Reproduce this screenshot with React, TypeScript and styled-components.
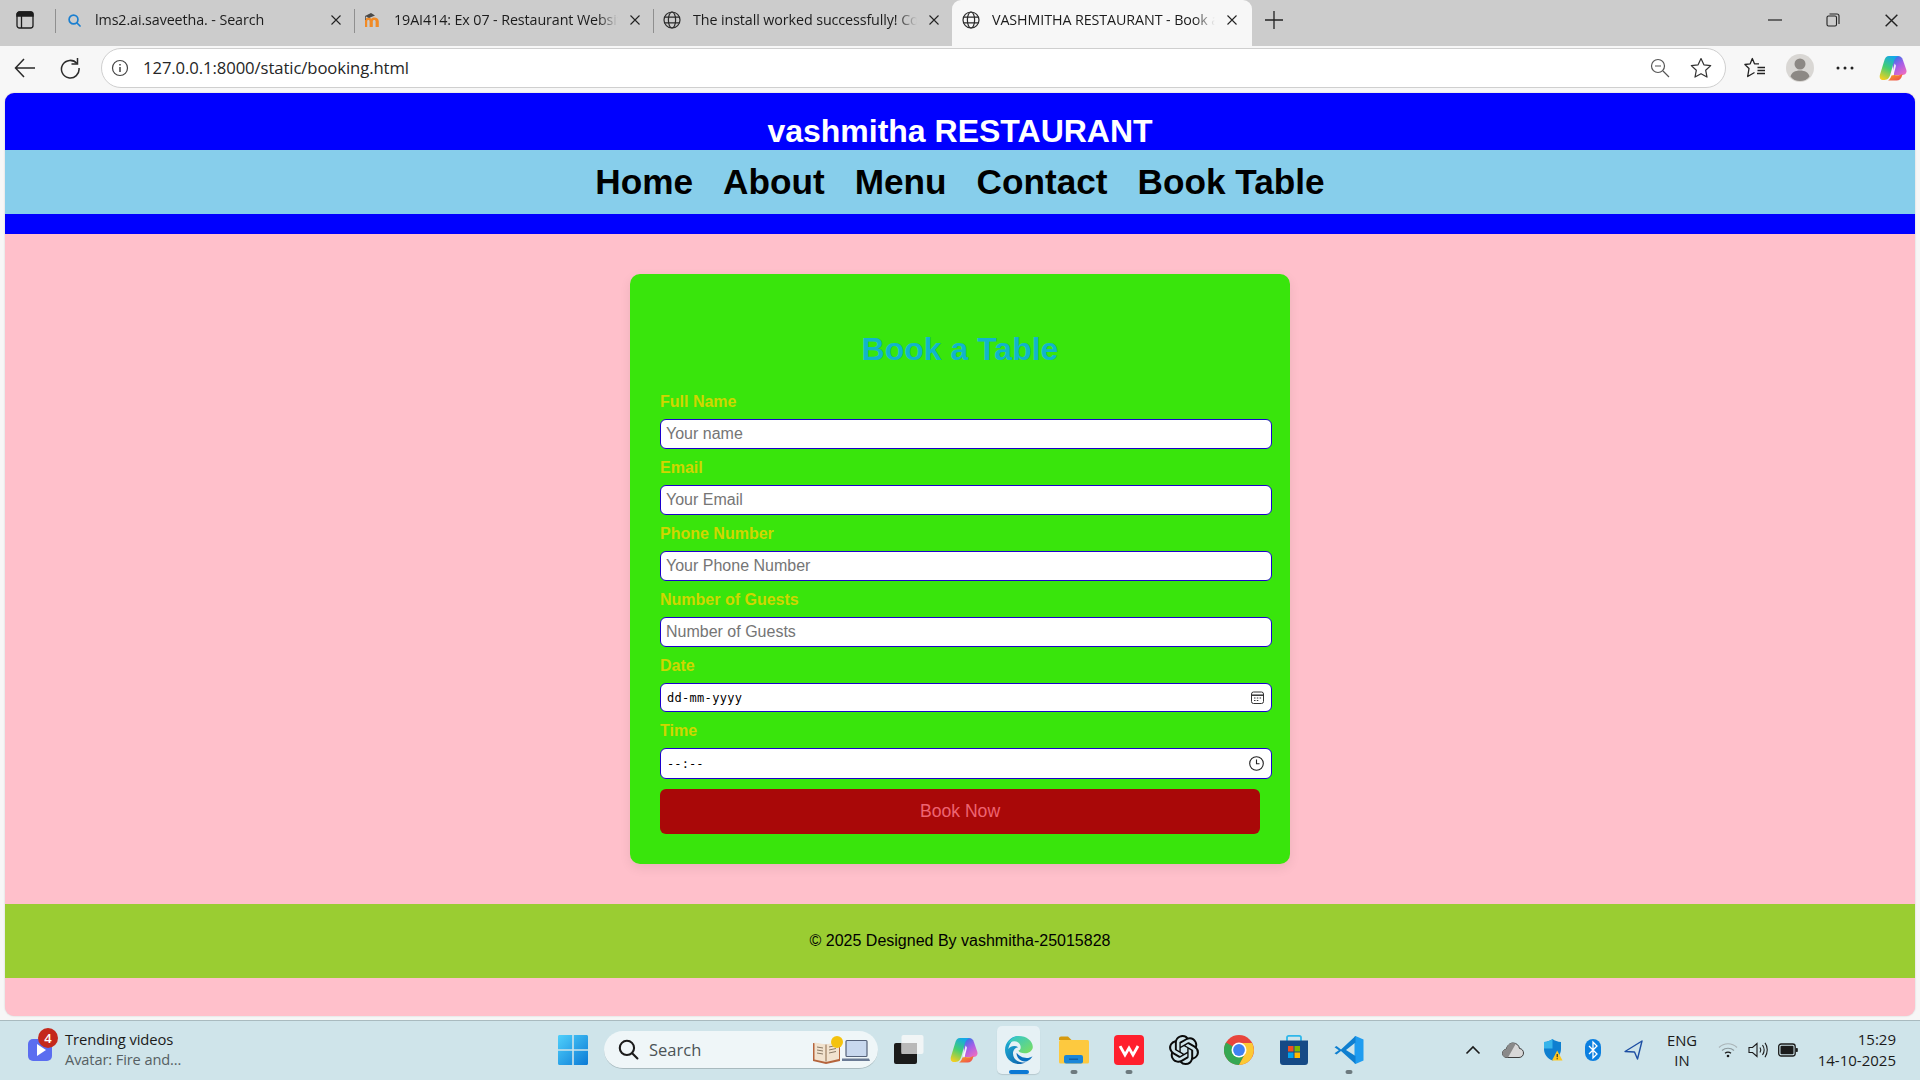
import React from "react";
import styled, { createGlobalStyle } from "styled-components";
import { SiOpenai } from "react-icons/si";

const Global = createGlobalStyle`
  html, body { margin: 0; padding: 0; width: 1920px; height: 1080px; overflow: hidden; background: #f7f7f7; }
  * { box-sizing: border-box; }
`;

const UI = `"Open Sans", "Noto Sans", sans-serif`;
const PAGE = `"Liberation Sans", Arial, sans-serif`;

const Screen = styled.div`
  width: 1920px; height: 1080px; display: flex; flex-direction: column; background: #f7f7f7; overflow: hidden;
`;

/* ---------- browser chrome ---------- */
const TabStrip = styled.div`
  height: 46px; flex: none; background: #cccccc; display: flex; align-items: stretch;
  font-family: ${UI}; color: #1c1c1c;
`;
const SideButton = styled.div`
  width: 55px; flex: none; display: flex; align-items: center; justify-content: center; padding-bottom: 6px; padding-right: 6px;
`;
const Tab = styled.div<{ $active?: boolean; $sep?: boolean }>`
  position: relative; flex: none; display: flex; align-items: center; height: 46px; padding-bottom: 6px;
  width: ${p => (p.$active ? "300px" : "299px")};
  padding-left: 10px;
  padding-right: ${p => (p.$active ? "13px" : "11px")};
  background: ${p => (p.$active ? "#f7f7f7" : "transparent")};
  border-radius: ${p => (p.$active ? "9px 9px 0 0" : "0")};
  &::before {
    content: ${p => (p.$sep ? '""' : "none")};
    position: absolute; left: 0; top: 9px; height: 24px; width: 1px; background: #8f8f8f;
  }
`;
const TabIcon = styled.span`
  width: 18px; height: 18px; flex: none; display: flex; align-items: center; justify-content: center; margin-right: 12px;
`;
const TabTitle = styled.span`
  flex: 1; min-width: 0; font-size: 14.3px; white-space: nowrap; overflow: hidden; letter-spacing: -0.1px; margin-bottom: 2px;
  mask-image: linear-gradient(to right, #000 calc(100% - 26px), transparent calc(100% - 6px));
`;
const TabClose = styled.span`
  width: 14px; height: 14px; margin-left: 4px; flex: none; display: flex; align-items: center; justify-content: center;
`;
const NewTab = styled.div`
  width: 44px; flex: none; display: flex; align-items: center; justify-content: center; padding-bottom: 6px;
`;
const WindowControls = styled.div`
  margin-left: auto; display: flex; align-items: center; padding-bottom: 6px; padding-right: 0;
`;
const WinButton = styled.span`
  width: 58px; display: flex; justify-content: center;
`;

const Toolbar = styled.div`
  height: 47px; flex: none; background: #f7f7f7; display: flex; align-items: center; padding-left: 13px; padding-bottom: 4px;
  font-family: ${UI};
`;
const NavIcon = styled.span`
  width: 24px; height: 24px; flex: none; display: flex; align-items: center; justify-content: center; margin-right: 21px;
`;
const AddressBar = styled.div`
  width: 1625px; height: 40px; flex: none; margin-left: -2px; background: #fff; border: 1px solid #cfcfcf; border-radius: 20px;
  display: flex; align-items: center; padding: 0 13px 0 9px;
`;
const InfoSlot = styled.span`
  width: 18px; height: 18px; flex: none; display: flex; margin-right: 14px;
`;
const Url = styled.span`
  font-size: 16.7px; color: #262626; letter-spacing: -0.1px;
`;
const AddressTools = styled.div`
  margin-left: auto; display: flex; align-items: center; gap: 20px;
`;
const ToolbarRight = styled.div`
  display: flex; align-items: center; margin-left: 16px;
`;
const ToolSlot = styled.span<{ $w: number }>`
  width: ${p => p.$w}px; height: 32px; display: flex; align-items: center; justify-content: center; flex: none;
`;

/* ---------- web page ---------- */
const Viewport = styled.div`
  height: 923px; flex: none; margin: 0 5px; border-radius: 9px; overflow: hidden; background: pink;
  display: flex; flex-direction: column; font-family: ${PAGE}; box-shadow: 0 0 2px rgba(0,0,0,.18);
`;
const HeaderBand = styled.header`
  height: 57px; background: #0000ff; padding-top: 20px; text-align: center; flex: none;
`;
const SiteTitle = styled.h1`
  margin: 0; color: #fff; font-size: 32px; line-height: 37px; font-weight: 700;
`;
const NavBand = styled.nav`
  height: 64px; background: #87ceeb; flex: none; display: flex; align-items: center; justify-content: center; gap: 30px;
`;
const NavLink = styled.a`
  color: #000; font-size: 35.2px; font-weight: 700; text-decoration: none;
`;
const BlueStrip = styled.div`
  height: 20px; background: #0000ff; flex: none;
`;
const Main = styled.main`
  height: 670px; flex: none; padding-top: 40px; display: flex; justify-content: center; background: pink;
`;
const Card = styled.form`
  width: 660px; height: 590px; background: #39e50c; border-radius: 10px; padding: 30px;
  box-shadow: 0 4px 12px rgba(0,0,0,.08);
`;
const CardTitle = styled.h2`
  margin: 27px 0 15px; color: #12b4cc; font-size: 32px; line-height: 37px; font-weight: 700; text-align: center;
`;
const Label = styled.label`
  display: block; color: #d0d600; font-size: 16px; font-weight: 700; line-height: 37px; height: 36px;
`;
const Input = styled.input`
  display: block; width: 612px; height: 30px; border: 1px solid #1a00cc; border-radius: 6px; background: #fff;
  padding: 0 5px; font: 16px ${PAGE}; color: #000; outline: none;
  &::placeholder { color: #757575; opacity: 1; }
`;
const PickerField = styled.div<{ $h: number }>`
  width: 612px; height: ${p => p.$h}px; border: 1px solid #1a00cc; border-radius: 6px; background: #fff;
  display: flex; align-items: center; justify-content: space-between; padding: 0 7px 0 6px;
`;
const PickerText = styled.span<{ $w: string }>`
  font-family: "DejaVu Sans Mono", monospace; font-size: 12px; color: #000; letter-spacing: ${p => p.$w}; padding-top: 1px;
`;
const BookButton = styled.button`
  display: block; width: 600px; height: 45px; margin-top: 10px; border: 0; border-radius: 6px; background: #a90808;
  color: #ee6472; font: 17.6px ${PAGE}; padding: 0; text-align: center;
`;
const Footer = styled.footer`
  height: 74px; flex: none; background: #9acd32; display: flex; align-items: center; justify-content: center;
  color: #000; font-size: 16px;
`;
const Spacer = styled.div`
  flex: 1;
`;

/* ---------- taskbar ---------- */
const Taskbar = styled.div`
  margin-top: 4px; height: 60px; flex: none; background: #cfe4ea; border-top: 1px solid #a9babf; display: flex; align-items: center;
  padding-bottom: 2px; font-family: ${UI}; color: #1b1b1b;
`;
const News = styled.div`
  width: 558px; flex: none; padding-left: 28px; display: flex; align-items: center; position: relative;
`;
const NewsIcon = styled.div`
  position: relative; width: 24px; height: 22px; margin-right: 13px; display: flex;
`;
const Badge = styled.span`
  position: absolute; left: 10px; top: -11px; width: 20px; height: 20px; border-radius: 50%; background: #c4281c; color: #fff;
  font-size: 13px; font-weight: 600; display: flex; align-items: center; justify-content: center;
`;
const NewsText = styled.div`
  display: flex; flex-direction: column; gap: 2px; line-height: 18px; margin-bottom: 2px;
`;
const NewsTitle = styled.span`font-size: 14.8px; color: #1b1b1b; letter-spacing: -0.1px;`;
const NewsSub = styled.span`font-size: 14.6px; color: #565f63; letter-spacing: -0.1px;`;
const SearchBox = styled.div`
  width: 274px; height: 38px; flex: none; margin-left: 16px; margin-right: 3px; border-radius: 19px; background: #eff6f8;
  border-bottom: 1px solid #a9babf; display: flex; align-items: center; padding-left: 14px; position: relative;
`;
const SearchText = styled.span`
  font-size: 16.5px; color: #4b5356; margin-left: 10px;
`;
const SearchArt = styled.span`
  margin-left: auto; margin-right: 8px; display: flex;
`;
const AppSlot = styled.div<{ $active?: boolean }>`
  position: relative; width: 55px; height: 48px; flex: none; display: flex; align-items: center; justify-content: center;
  &::before {
    content: ${p => (p.$active ? '""' : "none")};
    position: absolute; left: 6px; right: 6px; top: 0; bottom: 0; border-radius: 5px; background: #e6f1f5; box-shadow: 0 1px 1px rgba(0,0,0,.12);
  }
  & > svg { position: relative; }
`;
const Running = styled.span<{ $active?: boolean }>`
  position: absolute; bottom: 0; left: 50%; transform: translateX(-50%);
  width: ${p => (p.$active ? "20px" : "7px")}; height: 4px; border-radius: 2px;
  background: ${p => (p.$active ? "#0a78d4" : "#6d7a7f")};
`;
const Tray = styled.div`
  margin-left: auto; padding-right: 24px; display: flex; align-items: center;
`;
const TraySlot = styled.span<{ $w: number }>`
  width: ${p => p.$w}px; flex: none; display: flex; align-items: center; justify-content: center;
`;
const Lang = styled.div`
  width: 58px; margin-right: 2px; flex: none; text-align: center; font-size: 14.8px; line-height: 20px; color: #1b1b1b;
`;
const Clock = styled.div`
  width: 93px; flex: none; text-align: right; font-size: 15px; line-height: 21px; color: #1b1b1b; white-space: nowrap;
`;

/* ---------- icons ---------- */
const Globe = () => (
  <svg width="18" height="18" viewBox="0 0 18 18" fill="none" stroke="#2a2a2a" strokeWidth="1.2">
    <circle cx="9" cy="9" r="8" />
    <ellipse cx="9" cy="9" rx="3.6" ry="8" />
    <path d="M1.5 6.2h15M1.5 11.8h15" />
  </svg>
);
const CloseX = ({ s = 10, c = "#222" }: { s?: number; c?: string }) => (
  <svg width={s} height={s} viewBox="0 0 10 10" stroke={c} strokeWidth="1.1" fill="none">
    <path d="M.5.5l9 9M9.5.5l-9 9" />
  </svg>
);
const Moodle = () => (
  <svg width="18" height="18" viewBox="0 0 18 18">
    <path d="M1 16V9.5C1 7.5 2.6 6.4 4.4 6.4c1.2 0 2.2.5 2.8 1.3.8-.9 2-1.3 3.2-1.3 2.4 0 4.4 1.4 4.4 4V16h-3.2v-5.4c0-1-.5-1.5-1.4-1.5s-1.4.5-1.4 1.5V16H5.6v-5.4c0-1-.4-1.5-1.2-1.5S3.200 9.600 3.200 10.600V16z" fill="#f18a25" />
    <path d="M1 5l6-3 4 2.400-6 2.600z" fill="#4a4a4a" />
    <path d="M1.500 5v4" stroke="#4a4a4a" strokeWidth=".8" />
  </svg>
);
const EdgeLogo = ({ s = 30 }: { s?: number }) => (
  <svg width={s} height={s} viewBox="0 0 30 30">
    <defs>
      <linearGradient id="eg1" x1="0" y1="0" x2="1" y2="1"><stop offset="0" stopColor="#1fb6d8" /><stop offset="1" stopColor="#0b5aa8" /></linearGradient>
      <linearGradient id="eg2" x1="0" y1="0" x2="1" y2="1"><stop offset="0" stopColor="#2bc4d6" /><stop offset="1" stopColor="#7fe05a" /></linearGradient>
    </defs>
    <path d="M15 1C7 1 1 7.400 1 15c0 8 6.500 14 14 14 2.500 0 4.800-.6 6.800-1.800-5.800 1.500-12.800-2-12.800-8.700 0-3.500 2.300-6 5.300-6.300-2.800-2-7.800-1.600-10 1.800C5.600 7.200 10 3.400 15 1z" fill="url(#eg1)" />
    <path d="M15 1c-5 0-9.200 3.200-11 7.800 2.800-3 7.800-3.400 10.500-1.100 2 1.700 2.500 4 2 6-.5 1.500-2.200 1.800-2.200 1.800 1 2 4 3.200 8 2.700 3-.5 6.500-2.700 6.500-6.200C28.800 5.800 22.200 1 15 1z" fill="url(#eg2)" />
    <path d="M12.500 18c0 5.500 5.200 9.600 10.500 8.200 2.500-1 4.400-2.700 5.500-5-3.200 2.300-8 2.300-11.500.3-2.500-1.400-3.500-3-4.500-3.500z" fill="#0a6fc0" />
  </svg>
);
const Copilot = ({ s = 28, id }: { s?: number; id: string }) => (
  <svg width={s} height={s} viewBox="0 0 28 28">
    <defs>
      <linearGradient id={id + "a"} x1="0.6" y1="0" x2="0.2" y2="1"><stop offset="0" stopColor="#14a8e8" /><stop offset=".5" stopColor="#45cf70" /><stop offset="1" stopColor="#f5cf20" /></linearGradient>
      <linearGradient id={id + "b"} x1="0.2" y1="0" x2="0.8" y2="1"><stop offset="0" stopColor="#2478e8" /><stop offset=".5" stopColor="#a45ee8" /><stop offset="1" stopColor="#ee6cc0" /></linearGradient>
      <linearGradient id={id + "c"} x1="0" y1="0" x2="1" y2="1"><stop offset="0" stopColor="#f7a81a" /><stop offset="1" stopColor="#ee4458" /></linearGradient>
    </defs>
    <path d="M12 2h7c2.500 0 4 1.500 4.900 4l3.300 9.500c1 3.200-.6 5.500-4 5.500H15z" fill={`url(#${id}b)`} />
    <path d="M10 2h10c-3 .6-4.500 3-5.400 6.500L11.500 20c-.8 3-2.500 6-6 6H4C1 26 .2 23.500 1 20.500L5 7.500C6 3.800 7.500 2 10 2z" fill={`url(#${id}a)`} />
    <path d="M9 26.500h8.500c3 0 4.800-1.800 5.500-4.500l.6-2c-2.500 1.500-5.600 1.500-8.100 1l-3 .5c-.8 2.500-1.800 4-3.500 5z" fill={`url(#${id}c)`} />
    <path d="M15.600 9.500L13 20.500h1.700L17 11.500z" fill="#fff" fillOpacity=".9" />
  </svg>
);
const Chrome = () => (
  <svg width="30" height="30" viewBox="0 0 30 30">
    <circle cx="15" cy="15" r="15" fill="#e8453c" />
    <path d="M2 7.500A15 15 0 0 0 15 30l7-13-7-2z" fill="#35a853" />
    <path d="M15 8h13.100A15 15 0 0 1 15 30l7-13z" fill="#fcc934" />
    <circle cx="15" cy="15" r="7.500" fill="#fff" />
    <circle cx="15" cy="15" r="5.900" fill="#3f82f2" />
  </svg>
);
const VSCode = () => (
  <svg width="30" height="30" viewBox="0 0 30 30">
    <path d="M21.500 1 29.500 4.600v20.800L21.500 29l-1-.8V1.800z" fill="#1f9cf0" />
    <path d="M21.500 1 7 14.500 2.500 11 0.500 12.200l4.300 3-4.300 3L2.500 19.500 7 16l14.500 13V21L12 15l9.500-7.500z" fill="#0f7fd0" />
  </svg>
);
const Explorer = () => (
  <svg width="30" height="28" viewBox="0 0 30 28">
    <path d="M0 2.500C0 1.200 1 .500 2 .500h7l3.500 3.500H0z" fill="#d69a0f" />
    <rect x="0" y="4" width="30" height="23.500" rx="1.500" fill="#fdc93f" />
    <rect x="5" y="19" width="19" height="8.500" rx="2" fill="#1a86d8" />
    <rect x="10" y="22.500" width="9" height="1.400" fill="#0d5ea6" />
  </svg>
);
const Wps = () => (
  <svg width="30" height="30" viewBox="0 0 30 30">
    <rect width="30" height="30" rx="4" fill="#ff1f2d" />
    <path d="M6 11l5 9 4-7 4 7 5-9" fill="none" stroke="#fff" strokeWidth="2.800" strokeLinejoin="miter" />
    <path d="M4.500 10.500l10-2 10.500-1" fill="none" stroke="#ff1f2d" strokeWidth="1" />
  </svg>
);
const Store = () => (
  <svg width="30" height="32" viewBox="0 0 30 32">
    <path d="M8 7V3.500C8 2.500 8.700 1.800 9.700 1.800h10.600c1 0 1.700.7 1.700 1.700V7" fill="none" stroke="#2fb7ea" strokeWidth="1.800" />
    <path d="M1 6.500h28V28c0 1.800-1.200 3-3 3H4c-1.800 0-3-1.200-3-3z" fill="#164a86" />
    <rect x="9" y="12" width="5.500" height="5.500" fill="#f25022" />
    <rect x="15.500" y="12" width="5.500" height="5.500" fill="#7fba00" />
    <rect x="9" y="18.500" width="5.500" height="5.500" fill="#00a4ef" />
    <rect x="15.500" y="18.500" width="5.500" height="5.500" fill="#ffb900" />
  </svg>
);
const WinLogo = () => (
  <svg width="30" height="30" viewBox="0 0 30 30">
    <defs>
      <linearGradient id="w1" x1="0" y1="0" x2="1" y2="1"><stop offset="0" stopColor="#4fd0fb" /><stop offset="1" stopColor="#0b7ad6" /></linearGradient>
    </defs>
    <path d="M0 1.500C0 .6.600 0 1.500 0H14.200v14.200H0zM15.800 0H28.500C29.400 0 30 .6 30 1.500V14.200H15.800zM0 15.800H14.200V30H1.500C.6 30 0 29.400 0 28.500zM15.800 15.800H30V28.500c0 .9-.6 1.500-1.500 1.500H15.800z" fill="url(#w1)" />
  </svg>
);
const TaskView = () => (
  <svg width="30" height="30" viewBox="0 0 30 30">
    <rect x="0" y="8" width="23" height="21" rx="2" fill="#1b1b1b" />
    <rect x="7.500" y="0" width="22" height="19" rx="2" fill="#f4f6f7" fillOpacity=".9" />
    <rect x="7.500" y="8" width="15.500" height="11" fill="#b9b9b9" />
  </svg>
);
const BooksArt = () => (
  <svg width="58" height="30" viewBox="0 0 58 30">
    <path d="M1 9l13 2 14-3v19l-14 3-13-3z" fill="#b5643c" />
    <path d="M2.500 8.500l11.500 2 13-3v17.500l-13 3-11.500-2.500z" fill="#f2e3cf" />
    <path d="M14 10.500v17" stroke="#8c6a4a" strokeWidth="1" />
    <path d="M5 13l6 1M5 16l6 1M5 19l6 1M17 13l7-1.500M17 16l7-1.500M17 19l7-1.500" stroke="#8a7a66" strokeWidth="1" />
    <circle cx="25" cy="8" r="6" fill="#f4c20d" />
    <rect x="34" y="6.500" width="21" height="16" rx="1" fill="#c8d8ee" stroke="#55627a" strokeWidth="1.200" />
    <path d="M30 24.500h27l1 2.500H30z" fill="#6a7a94" />
  </svg>
);
const SearchGlass = ({ s = 20, c = "#1b1b1b", w = 2 }: { s?: number; c?: string; w?: number }) => (
  <svg width={s} height={s} viewBox="0 0 20 20" fill="none" stroke={c} strokeWidth={w} strokeLinecap="round">
    <circle cx="8.500" cy="8.500" r="6.800" />
    <path d="M13.500 13.500l5 5" />
  </svg>
);

const TABS = [
  { title: "lms2.ai.saveetha. - Search", icon: <SearchGlass s={13} c="#1a7fd0" w={2.6} />, sep: true },
  { title: "19AI414: Ex 07 - Restaurant Website", icon: <Moodle />, sep: true },
  { title: "The install worked successfully! Congratulations!", icon: <Globe />, sep: true },
];
const FIELDS = [
  { label: "Full Name", ph: "Your name", type: "text" },
  { label: "Email", ph: "Your Email", type: "email" },
  { label: "Phone Number", ph: "Your Phone Number", type: "tel" },
  { label: "Number of Guests", ph: "Number of Guests", type: "text" },
];
const NAV = ["Home", "About", "Menu", "Contact", "Book Table"];

export default function App() {
  return (
    <Screen>
      <Global />
      <TabStrip>
        <SideButton>
          <svg width="18" height="18" viewBox="0 0 18 18" fill="none" stroke="#1c1c1c" strokeWidth="1.300">
            <rect x="1" y="1" width="16" height="16" rx="2.500" />
            <path d="M1 3.500C1 2 2 1 3.500 1h11C16 1 17 2 17 3.500V5H1z" fill="#1c1c1c" />
            <path d="M5.500 5v12" />
          </svg>
        </SideButton>
        {TABS.map(t => (
          <Tab key={t.title} $sep={t.sep}>
            <TabIcon>{t.icon}</TabIcon>
            <TabTitle>{t.title}</TabTitle>
            <TabClose><CloseX /></TabClose>
          </Tab>
        ))}
        <Tab $active>
          <TabIcon><Globe /></TabIcon>
          <TabTitle>VASHMITHA RESTAURANT - Book a Table</TabTitle>
          <TabClose><CloseX /></TabClose>
        </Tab>
        <NewTab>
          <svg width="18" height="18" viewBox="0 0 18 18" stroke="#222" strokeWidth="1.300"><path d="M9 0v18M0 9h18" /></svg>
        </NewTab>
        <WindowControls>
          <WinButton><svg width="14" height="2" viewBox="0 0 14 2"><path d="M0 1h14" stroke="#222" strokeWidth="1.200" /></svg></WinButton>
          <WinButton>
            <svg width="14" height="14" viewBox="0 0 14 14" fill="none" stroke="#222" strokeWidth="1.100">
              <rect x="1" y="3" width="9.500" height="10" rx="1.500" /><path d="M3.500 1h7.500c1 0 2 1 2 2v8" />
            </svg>
          </WinButton>
          <WinButton><CloseX s={13} /></WinButton>
        </WindowControls>
      </TabStrip>

      <Toolbar>
        <NavIcon>
          <svg width="22" height="20" viewBox="0 0 22 20" fill="none" stroke="#2a2a2a" strokeWidth="1.500"><path d="M10 1L1.500 10l8.500 9M2 10h19" /></svg>
        </NavIcon>
        <NavIcon>
          <svg width="22" height="22" viewBox="0 0 22 22" fill="none" stroke="#2a2a2a" strokeWidth="1.500"><path d="M18 6.500A8.800 8.800 0 1 0 20 11" /><path d="M18.500 1v6h-6" /></svg>
        </NavIcon>
        <AddressBar>
          <InfoSlot>
            <svg width="18" height="18" viewBox="0 0 18 18" fill="none" stroke="#444" strokeWidth="1.200"><circle cx="9" cy="9" r="7.500" /><path d="M9 8v5M9 5v1.500" strokeWidth="1.500" /></svg>
          </InfoSlot>
          <Url>127.0.0.1:8000/static/booking.html</Url>
          <AddressTools>
            <svg width="20" height="20" viewBox="0 0 20 20" fill="none" stroke="#555" strokeWidth="1.200"><circle cx="8" cy="8" r="6.500" /><path d="M5 8h6M13 13l6 6" /></svg>
            <svg width="22" height="22" viewBox="0 0 22 22" fill="none" stroke="#333" strokeWidth="1.200" strokeLinejoin="round"><path d="M11 1.500l2.900 6.300 6.800.8-5 4.700 1.300 6.800-6-3.400-6 3.400 1.300-6.800-5-4.700 6.800-.8z" /></svg>
          </AddressTools>
        </AddressBar>
        <ToolbarRight>
          <ToolSlot $w={26}>
            <svg width="22" height="22" viewBox="0 0 22 22" fill="none" stroke="#222" strokeWidth="1.300" strokeLinejoin="round"><path d="M15 6.800H10.500L8.300 1.500 6.200 6.800.9 7.500l4.100 4L3.700 19.500l6.800-4" /><path d="M13.500 10.500H21M13.500 13.500H21M13 16.500h8" /></svg>
          </ToolSlot>
          <ToolSlot $w={64}>
            <svg width="28" height="28" viewBox="0 0 28 28"><circle cx="14" cy="14" r="14" fill="#d9d7d4" /><circle cx="14" cy="10" r="5.500" fill="#8c8884" /><path d="M4.500 22.500C5.500 18.500 9 16.500 14 16.500s8.500 2 9.500 6c-2.200 3-5.500 4.500-9.500 4.500s-7.300-1.500-9.500-4.500z" fill="#8c8884" /></svg>
          </ToolSlot>
          <ToolSlot $w={26}>
            <svg width="18" height="4" viewBox="0 0 18 4" fill="#222"><circle cx="2" cy="2" r="1.500" /><circle cx="9" cy="2" r="1.500" /><circle cx="16" cy="2" r="1.500" /></svg>
          </ToolSlot>
          <ToolSlot $w={70}><Copilot id="cp1" /></ToolSlot>
        </ToolbarRight>
      </Toolbar>

      <Viewport>
        <HeaderBand><SiteTitle>vashmitha RESTAURANT</SiteTitle></HeaderBand>
        <NavBand>{NAV.map(n => <NavLink key={n} href="#">{n}</NavLink>)}</NavBand>
        <BlueStrip />
        <Main>
          <Card onSubmit={e => e.preventDefault()}>
            <CardTitle>Book a Table</CardTitle>
            {FIELDS.map(f => (
              <React.Fragment key={f.label}>
                <Label>{f.label}</Label>
                <Input type={f.type} placeholder={f.ph} />
              </React.Fragment>
            ))}
            <Label>Date</Label>
            <PickerField $h={29}>
              <PickerText $w="0.3px">dd-mm-yyyy</PickerText>
              <svg width="13" height="13" viewBox="0 0 13 13" fill="none" stroke="#333" strokeWidth="1"><rect x=".5" y="1" width="12" height="11.500" rx="2" /><path d="M.5 4.200h12" strokeWidth="1.500" /><path d="M3 7h1.500M5.800 7h1.500M8.600 7h1.500M3 9.500h1.500M5.800 9.500h1.500" /></svg>
            </PickerField>
            <Label>Time</Label>
            <PickerField $h={31}>
              <PickerText $w="0.1px">--:--</PickerText>
              <svg width="15" height="15" viewBox="0 0 15 15" fill="none" stroke="#222" strokeWidth="1.100"><circle cx="7.500" cy="7.500" r="6.800" /><path d="M7.500 3.500v4.300h3" /></svg>
            </PickerField>
            <BookButton type="submit">Book Now</BookButton>
          </Card>
        </Main>
        <Footer>© 2025 Designed By vashmitha-25015828</Footer>
        <Spacer />
      </Viewport>

      <Taskbar>
        <News>
          <NewsIcon>
            <svg width="24" height="22" viewBox="0 0 24 22">
              <rect width="24" height="22" rx="5" fill="#5b6df0" />
              <path d="M9 5l9 6-9 6z" fill="#fff" />
            </svg>
            <Badge>4</Badge>
          </NewsIcon>
          <NewsText>
            <NewsTitle>Trending videos</NewsTitle>
            <NewsSub>Avatar: Fire and...</NewsSub>
          </NewsText>
        </News>
        <WinLogo />
        <SearchBox>
          <SearchGlass s={21} />
          <SearchText>Search</SearchText>
          <SearchArt><BooksArt /></SearchArt>
        </SearchBox>
        <AppSlot><TaskView /></AppSlot>
        <AppSlot><Copilot id="cp2" /></AppSlot>
        <AppSlot $active><EdgeLogo /><Running $active /></AppSlot>
        <AppSlot><Explorer /><Running /></AppSlot>
        <AppSlot><Wps /><Running /></AppSlot>
        <AppSlot><SiOpenai size={30} color="#0b0b0b" /></AppSlot>
        <AppSlot><Chrome /></AppSlot>
        <AppSlot><Store /></AppSlot>
        <AppSlot><VSCode /><Running /></AppSlot>
        <Tray>
          <TraySlot $w={40}>
            <svg width="16" height="10" viewBox="0 0 16 10" fill="none" stroke="#1b1b1b" strokeWidth="1.600"><path d="M1.500 8.500L8 2l6.500 6.500" /></svg>
          </TraySlot>
          <TraySlot $w={40}>
            <svg width="22" height="16" viewBox="0 0 22 16"><path d="M5 15.500C2 15.500.5 13.500.5 11.300c0-2.300 1.700-4 3.800-4.100C5 4 7.500 1 11 1c3.700 0 6 2.600 6.500 5.500 2.400.2 4 2.200 4 4.500 0 2.500-1.800 4.500-4.500 4.500z" fill="#d8d8d8" stroke="#3d3d3d" strokeWidth="1" /><path d="M5 15.500C2 15.500.5 13.500.5 11.300c0-2.300 1.700-4 3.800-4.100C5 4 7.500 1 11 1c1 0 2 .2 2.800.7L6 15.500z" fill="#8a8a8a" /></svg>
          </TraySlot>
          <TraySlot $w={40}>
            <svg width="20" height="22" viewBox="0 0 20 22"><path d="M9.500 0c2.200 1.700 5.200 2.800 8.500 3v7c0 5.500-3.500 9.500-8.500 11.500C4.500 19.500 1 15.500 1 10V3c3.300-.2 6.300-1.300 8.500-3z" fill="#0f7fd0" /><path d="M9.500 0C7.300 1.700 4.300 2.800 1 3v6.500h8.500z" fill="#36b4ea" /><path d="M14.200 11.500l5.300 10H9z" fill="#ffc81f" /><path d="M14.200 15v3.300M14.200 19.300v1" stroke="#222" strokeWidth="1.100" /></svg>
          </TraySlot>
          <TraySlot $w={40}>
            <svg width="16" height="22" viewBox="0 0 16 22"><rect width="16" height="22" rx="8" fill="#0b7fe0" /><path d="M4 7l8 8-4 4V3l4 4-8 8" fill="none" stroke="#fff" strokeWidth="1.300" /></svg>
          </TraySlot>
          <TraySlot $w={40}>
            <svg width="19" height="20" viewBox="0 0 19 20" fill="none" stroke="#1d4ea3" strokeWidth="1.400" strokeLinejoin="round"><path d="M18 1L1 11.500l9.500 0.500 3 7z" /></svg>
          </TraySlot>
          <Lang>ENG<br />IN</Lang>
          <TraySlot $w={30}>
            <svg width="20" height="16" viewBox="0 0 20 16" fill="none" stroke="#1b1b1b" strokeWidth="1.200"><path d="M1 5.500C6 .5 14 .5 19 5.500" stroke="#aab4b8" /><path d="M4 8.500c3.500-3 8.500-3 12 0" stroke="#8d9a9f" /><path d="M7 11.300c1.800-1.500 4.200-1.500 6 0" /><circle cx="10" cy="14" r="1.300" fill="#1b1b1b" stroke="none" /></svg>
          </TraySlot>
          <TraySlot $w={30}>
            <svg width="21" height="18" viewBox="0 0 21 18" fill="none" stroke="#1b1b1b" strokeWidth="1.100"><path d="M1 6.500h3.500L9 2.500v13l-4.500-4H1z" /><path d="M12 6.500c1 1.500 1 3.500 0 5M14.500 4c2 3 2 7 0 10M17 1.800c3 4 3 10 0 14.400" /></svg>
          </TraySlot>
          <TraySlot $w={30}>
            <svg width="20" height="14" viewBox="0 0 20 14"><rect x=".7" y="1" width="16.500" height="12" rx="2.500" fill="none" stroke="#1b1b1b" strokeWidth="1.300" /><rect x="2.500" y="2.800" width="13" height="8.400" rx="1" fill="#1b1b1b" /><rect x="17.800" y="5" width="2" height="4" rx=".8" fill="#1b1b1b" /></svg>
          </TraySlot>
          <Clock>15:29<br />14-10-2025</Clock>
        </Tray>
      </Taskbar>
    </Screen>
  );
}
